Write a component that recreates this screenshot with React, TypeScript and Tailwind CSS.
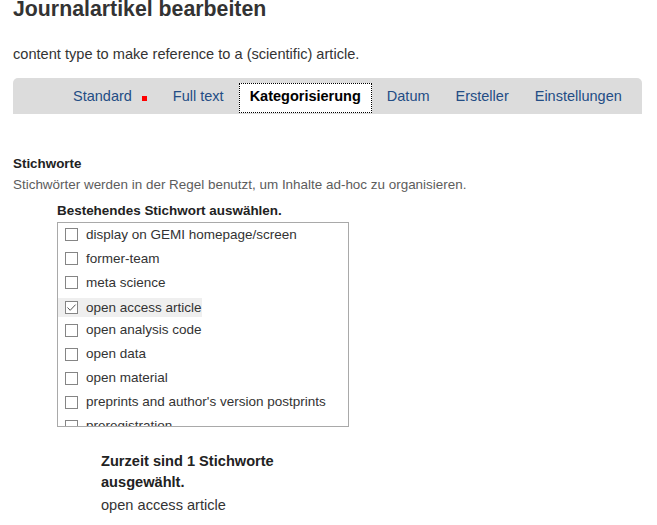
import React from "react";

const tags = [
  "display on GEMI homepage/screen",
  "former-team",
  "meta science",
  "open access article",
  "open analysis code",
  "open data",
  "open material",
  "preprints and author's version postprints",
  "preregistration",
];

function Box({ checked }: { checked?: boolean }) {
  return (
    <span className="flex h-[13px] w-[13px] shrink-0 items-center justify-center border border-[#858585] bg-white">
      {checked && (
        <svg width="11" height="11" viewBox="0 0 11 11">
          <path d="M1.5 5.5 L4.2 8.3 L9.6 2.6" fill="none" stroke="#555" strokeWidth="1" />
        </svg>
      )}
    </span>
  );
}

export default function App() {
  return (
    <div className="min-h-[525px] w-[657px] bg-white pl-[13px] text-[#333] [font-family:'Liberation_Sans',Arial,sans-serif]">
      <h1 className="text-[21.3px] font-bold leading-[18px] text-[#333]">Journalartikel bearbeiten</h1>
      <p className="mt-[26px] text-[14.6px] leading-[20px] text-[#333]">
        content type to make reference to a (scientific) article.
      </p>
      <div className="mt-[14px] flex h-[36px] w-[629px] items-start gap-[4px] rounded-t-[5px] bg-[#dcdcdc] pl-[49px] pt-[5px] text-[14.5px]">
        <div className="flex h-[30px] items-center px-[11px] pb-[2px] text-[#234d85]">
          <span>Standard</span>
          <span className="ml-[10px] mt-[2px] inline-block h-[5px] w-[5px] bg-[#ff0000]" />
        </div>
        <div className="flex h-[30px] items-center px-[11px] pb-[2px] text-[#234d85]">Full text</div>
        <div className="flex h-[30px] items-center border border-dotted border-black bg-white px-[10px] pb-[2px] font-bold text-black">
          Kategorisierung
        </div>
        {["Datum", "Ersteller", "Einstellungen"].map((t) => (
          <div key={t} className="flex h-[30px] items-center px-[11px] pb-[2px] text-[#234d85]">
            {t}
          </div>
        ))}
      </div>

      <div className="mt-[42.4px] text-[13.4px] font-bold leading-[16px] text-[#222]">Stichworte</div>
      <div className="mt-[5px] text-[13.45px] leading-[16px] text-[#5c5c5c]">
        Stichwörter werden in der Regel benutzt, um Inhalte ad-hoc zu organisieren.
      </div>

      <div className="ml-[44px]">
        <div className="mt-[10px] text-[13.45px] font-bold leading-[16px] text-[#222]">
          Bestehendes Stichwort auswählen.
        </div>
        <div className="mt-[2.6px] h-[205px] w-[292px] overflow-hidden border border-[#a9a9a9] bg-white pt-[1.5px]">
          {tags.map((t, i) => (
            <div key={t} className="h-[23.9px]">
              <div
                className={`inline-flex h-[19px] items-center pl-[7px] text-[13.5px] text-[#333] ${
                  i === 3 ? "bg-[#efefef]" : ""
                }`}
              >
                <Box checked={i === 3} />
                <span className="ml-[8px] whitespace-nowrap">{t}</span>
              </div>
            </div>
          ))}
        </div>
      </div>

      <div className="ml-[88px] mt-[24px] w-[190px]">
        <div className="text-[14.6px] font-bold leading-[21px] text-[#222]">
          Zurzeit sind 1 Stichworte ausgewählt.
        </div>
        <div className="mt-[2px] text-[14.6px] leading-[20px] text-[#333]">open access article</div>
      </div>
    </div>
  );
}
